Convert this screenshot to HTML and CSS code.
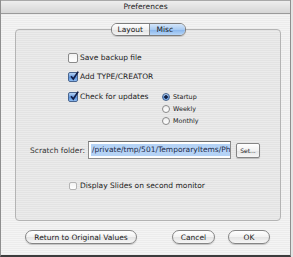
FILE: index.html
```html
<!DOCTYPE html>
<html lang="en">
  <head>
    <meta charset="UTF-8" />
    <link rel="stylesheet" href="styles.css">
    <title>Preferences</title>
  </head>
  <body>
    <div class="window">
      <div class="titlebar">Preferences</div>

      <div class="group">
        <div class="tabs">
          <span class="tab">Layout</span>
          <span class="tab selected">Misc</span>
        </div>

        <label class="check row-save"><span class="box"></span>Save backup file</label>
        <label class="check row-type">
          <span class="box on"><svg viewBox="0 0 10 10"><path d="M2 5.2 L4.3 8 L9.2 0.6" /></svg></span>Add TYPE/CREATOR
        </label>

        <div class="updates">
          <label class="check">
            <span class="box on"><svg viewBox="0 0 10 10"><path d="M2 5.2 L4.3 8 L9.2 0.6" /></svg></span>Check for updates
          </label>
          <div class="radios">
            <label class="radio"><span class="dot on"></span>Startup</label>
            <label class="radio"><span class="dot"></span>Weekly</label>
            <label class="radio"><span class="dot"></span>Monthly</label>
          </div>
        </div>

        <div class="scratch">
          <span class="scratch-label">Scratch folder:</span>
          <span class="field"><span class="sel">/private/tmp/501/TemporaryItems/Ph</span></span>
          <span class="btn btn-set">Set...</span>
        </div>

        <label class="check row-slides"><span class="box off"></span>Display Slides on second monitor</label>
      </div>

      <div class="buttons">
        <span class="btn btn-return">Return to Original Values</span>
        <span class="btn btn-cancel">Cancel</span>
        <span class="btn btn-ok">OK</span>
      </div>
    </div>
  </body>
</html>
```

FILE: styles.css
```css
body {
  margin: 0;
  background: #e4e4e4;
  font-family: 'DejaVu Sans', sans-serif;
  font-size: 7.5px;
  color: #1a1a1a;
}

.window {
  width: 291px;
  height: 257px;
  box-sizing: border-box;
  border-left: 1px solid #8e8e8e;
  border-right: 1px solid #8e8e8e;
  border-bottom: 2px solid #3c3c3c;
  background: repeating-linear-gradient(#ececec 0 1px, #f4f4f4 1px 2px);
  display: flex;
  flex-direction: column;
}

.titlebar {
  height: 14px;
  box-sizing: border-box;
  border-top: 1px solid #a8a8a8;
  border-bottom: 1px solid #9a9a9a;
  background: linear-gradient(#eeeeee, #d6d6d6);
  text-align: center;
  line-height: 12px;
  color: #222;
}

.group {
  margin: 15px 0 0 14px;
  width: 266px;
  height: 192px;
  box-sizing: border-box;
  border: 1px solid #b4b4b4;
  border-radius: 4px;
  background: rgba(0, 0, 0, 0.035);
  display: flex;
  flex-direction: column;
}

.tabs {
  align-self: center;
  margin-top: -7px;
  display: flex;
  height: 13px;
  box-sizing: border-box;
  border: 1px solid #7d7d7d;
  border-radius: 6px;
  overflow: hidden;
  box-shadow: 0 1px 1px rgba(0, 0, 0, 0.15);
}
.tab {
  line-height: 11px;
  padding: 0 6px 0 6px;
  background: linear-gradient(#ffffff, #f0f0f0 50%, #e2e2e2 51%, #f4f4f4);
}
.tab:first-child {
  width: 25px;
  padding-left: 6px;
  border-right: 1px solid #8a8a8a;
}
.tab.selected {
  width: 22px;
  padding: 0 6px 0 7px;
  background: linear-gradient(#d4e6fa, #a9cbf2 50%, #86b4ec 51%, #b7d6f8);
}

.check,
.radio {
  display: flex;
  align-items: center;
  gap: 2px;
  line-height: 10px;
}

.box {
  width: 10px;
  height: 10px;
  box-sizing: border-box;
  border: 1px solid #8a8a8a;
  border-radius: 2px;
  background: linear-gradient(#f2f2f2, #ffffff);
  position: relative;
  flex: none;
}
.box.on {
  border-color: #4a6690;
  background: linear-gradient(#b9d4f4, #5e95de 55%, #8dbaf0);
}
.box.off {
  width: 8px;
  height: 8px;
  margin: 0 1px;
  border-color: #b4b4b4;
}
.box svg {
  position: absolute;
  left: 0;
  top: -2px;
  width: 10px;
  height: 10px;
}
.box svg path {
  fill: none;
  stroke: #14204a;
  stroke-width: 1.7;
}

.row-save {
  margin: 17px 0 0 52px;
}
.row-type {
  margin: 9px 0 0 52px;
}
.row-slides {
  margin: 22px 0 0 52px;
}

.updates {
  margin: 9px 0 0 52px;
  display: flex;
}
.updates .check {
  width: 94px;
  height: 12px;
}
.radios {
  display: flex;
  flex-direction: column;
}
.radio {
  height: 12px;
  font-size: 6.4px;
  gap: 3px;
}
.dot {
  width: 8px;
  height: 8px;
  box-sizing: border-box;
  border: 1px solid #8a8a8a;
  border-radius: 50%;
  background: linear-gradient(#eeeeee, #ffffff);
  flex: none;
}
.dot.on {
  border-color: #46648e;
  background: radial-gradient(circle, #142040 0 1.5px, transparent 1.9px),
    linear-gradient(#b9d4f4, #5e95de 55%, #8dbaf0);
}

.scratch {
  margin: 14px 0 0 14px;
  height: 18px;
  display: flex;
  align-items: center;
}
.scratch-label {
  width: 58px;
  color: #333;
}
.field {
  width: 143px;
  height: 18px;
  box-sizing: border-box;
  border: 1px solid #8c8c8c;
  border-top-color: #6e6e6e;
  background: #ffffff;
  padding: 2px;
  display: flex;
  overflow: hidden;
}
.sel {
  flex: 1;
  background: #b5d3f6;
  line-height: 12px;
  padding-left: 1px;
  white-space: nowrap;
  color: #1e2a48;
}

.btn {
  display: flex;
  align-items: center;
  justify-content: center;
  box-sizing: border-box;
  border: 1px solid #858585;
  background: linear-gradient(#ffffff, #f2f2f2 50%, #e4e4e4 51%, #f6f6f6);
  box-shadow: 0 1px 1px rgba(0, 0, 0, 0.18);
}
.btn-set {
  margin-left: 5px;
  width: 24px;
  height: 15px;
  border-radius: 2px;
  font-size: 6px;
}

.buttons {
  margin-top: 9px;
  display: flex;
  height: 14px;
}
.buttons .btn {
  height: 14px;
  border-radius: 7px;
}
.btn-return {
  margin-left: 24px;
  width: 112px;
}
.btn-cancel {
  margin-left: 35px;
  width: 43px;
}
.btn-ok {
  margin-left: 13px;
  width: 42px;
}
```
